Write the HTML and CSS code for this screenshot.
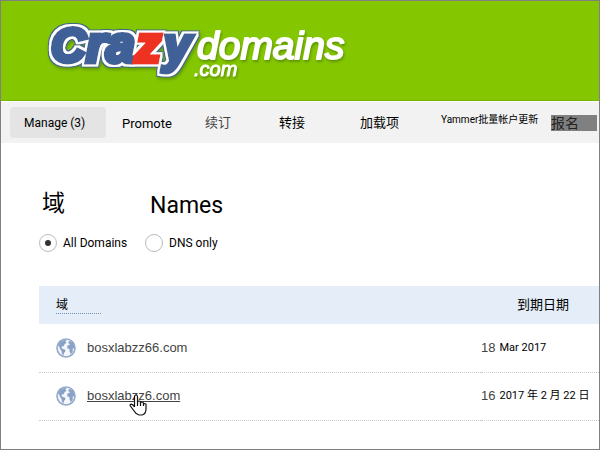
FILE: index.html
```html
<!DOCTYPE html>
<html lang="zh-CN">
<head>
<meta charset="utf-8">
<meta name="viewport" content="width=device-width, initial-scale=1">
<title>Crazy Domains</title>
<link rel="stylesheet" href="styles.css">
</head>
<body>
<svg class="defs" aria-hidden="true">
  <symbol id="globe" viewBox="0 0 20 20">
    <circle cx="10" cy="10" r="9" fill="#f4f7fb" stroke="#93aaca" stroke-width="1.6"/>
    <path fill="#89a2c6" d="M2 7 L4.500 3.500 L8 2 L10.500 2 L9.500 3.500 L10.500 5 L8.500 6 L8 8 L6 8.500 L5.500 10 L7 11 L9 11.500 L9.500 13 L8 15 L7.500 17.500 L6 16 L5.500 13 L4 11 L3 8.500 Z M12 4 L14 3 L17 5 L18.500 8 L18.500 11 L17.500 10 L16.500 11.500 L17 13 L15.500 15.500 L14.500 16 L13.500 13 L13.500 11 L11.500 10.500 L11 8.500 L12.500 7 L14 7 L13 5.500 Z"/>
  </symbol>
  <filter id="outline" x="-10%" y="-20%" width="120%" height="140%">
    <feMorphology in="SourceAlpha" operator="dilate" radius="3" result="big"/>
    <feMorphology in="SourceAlpha" operator="dilate" radius="2" result="mid"/>
    <feGaussianBlur in="big" stdDeviation="1.5" result="soft"/>
    <feOffset in="soft" dx="1" dy="2" result="drop"/>
    <feFlood flood-color="#4c7a00" flood-opacity="0.6"/><feComposite in2="drop" operator="in" result="shadow"/>
    <feFlood flood-color="#3f6a8c"/><feComposite in2="big" operator="in" result="edge"/>
    <feFlood flood-color="#ffffff"/><feComposite in2="mid" operator="in" result="white"/>
    <feMerge><feMergeNode in="shadow"/><feMergeNode in="edge"/><feMergeNode in="white"/><feMergeNode in="SourceGraphic"/></feMerge>
  </filter>
</svg>
<div class="page">
  <header class="banner">
    <a class="logo" href="#">
      <svg width="320" height="70" viewBox="0 0 320 70" role="img" aria-label="Crazy domains .com">
        <text class="crazy" x="11" y="41"><tspan class="cap">C</tspan><tspan x="46">r</tspan><tspan x="66">a</tspan><tspan x="124" class="tail">y</tspan><tspan x="95" class="red">z</tspan></text>
        <text class="domains" x="157" y="38">domains</text>
        <text class="com" x="154" y="55">.com</text>
      </svg>
    </a>
  </header>
  <nav class="tabs">
    <a class="tab active" href="#">Manage (3)</a>
    <a class="tab promote" href="#">Promote</a>
    <a class="tab soft" href="#">续订</a>
    <a class="tab" href="#">转接</a>
    <a class="tab" href="#">加载项</a>
    <a class="tab small" href="#">Yammer批量帐户更新</a>
    <a class="tab signup" href="#"><span>报名</span></a>
  </nav>
  <main class="content">
    <div class="filters">
      <h1>域</h1>
      <h1>Names</h1>
      <label><input type="radio" name="filter" checked>All Domains</label>
      <label><input type="radio" name="filter">DNS only</label>
    </div>
    <table>
      <thead>
        <tr><th scope="col"><a class="sort" href="#">域</a></th><th scope="col" class="due">到期日期</th></tr>
      </thead>
      <tbody>
        <tr>
          <td><div class="domain"><svg class="globe" aria-hidden="true"><use href="#globe"/></svg><a href="#">bosxlabzz66.com</a></div></td>
          <td><div class="date"><span class="day">18</span><span>Mar 2017</span></div></td>
        </tr>
        <tr>
          <td><div class="domain hovered"><svg class="globe" aria-hidden="true"><use href="#globe"/></svg><a href="#">bosxlabzz6.com<svg class="hand" viewBox="0 0 18 22" aria-hidden="true"><path d="M5.500 13 V3 Q5.500 1 7 1 T8.500 3 V8.500 Q8.500 7 10 7 T11.500 8.500 V9.500 Q11.500 8 13 8 T14.500 9.500 V10.500 Q14.500 9.500 15.800 9.500 T17 11 V15 Q17 20 13 21 H10 Q7 20.500 5.500 17.500 L1.200 11.800 Q0.800 10.300 2.200 10.200 Q3.800 10.300 5.500 13 M8.500 8.500 V12 M11.500 9 V12 M14.500 10 V12"/></svg></a></div></td>
          <td><div class="date"><span class="day">16</span><span>2017 年 2 月 22 日</span></div></td>
        </tr>
      </tbody>
    </table>
  </main>
</div>
</body>
</html>
```
FILE: styles.css
```css
* { box-sizing: border-box; }
body {
  margin: 0;
  background: #fff;
  color: #000;
  font: 12px/16px Roboto, "Noto Sans CJK SC", sans-serif;
}
a { color: inherit; text-decoration: none; }
.defs { position: absolute; width: 0; height: 0; }
.page { min-height: 100vh; border: 1px solid #808080; }

.banner {
  height: 100px;
  padding: 20px 0 0 39px;
  background: #84c600;
  border-bottom: 1px solid #78b400;
}
.logo svg { display: block; overflow: visible; }
.crazy {
  font: italic 700 52px "Liberation Sans", sans-serif;
  fill: #3f6098;
  stroke: #3f6098;
  stroke-width: 5px;
  filter: url(#outline);
}
.crazy .cap { font-size: 48px; }
.crazy .tail { font-size: 48px; }
.crazy .red { fill: #ee3124; stroke: #ee3124; }
.domains, .com {
  fill: #fff;
  stroke: #fff;
  stroke-linejoin: round;
  filter: drop-shadow(1px 2px 1px #5f9600);
}
.domains { font: italic 400 39px "Liberation Sans", sans-serif; stroke-width: 2px; }
.com { font: italic 400 20px "Liberation Sans", sans-serif; stroke-width: 1px; }

.tabs {
  display: grid;
  grid-template-columns: 112fr 83fr 74fr 81fr 81fr 110fr 48fr;
  align-items: center;
  height: 42px;
  padding-left: 9px;
  background: #f2f2f2;
  border-top: 1px solid #fff;
}
.tab { font-size: 13px; white-space: nowrap; }
.active {
  justify-self: start;
  padding: 8px 21px 7px 14px;
  border-radius: 4px;
  background: #e4e4e4;
  font-size: 12px;
}
.promote { padding-top: 2px; }
.soft { color: #444; }
.small { font-size: 10px; padding-bottom: 6px; }
.signup { padding-right: 2px; font-size: 14px; }
.signup span { display: block; background: #808080; line-height: 16px; color: #222; }

.content { padding: 41px 0 0 38px; }
.filters {
  display: grid;
  grid-template-columns: 106px 1fr;
  row-gap: 7px;
  margin-bottom: 33px;
}
h1 { margin: 0; padding-left: 3px; font-size: 23px; line-height: 40px; font-weight: 400; }
h1 + h1 { padding-left: 5px; padding-top: 2px; }
label { display: flex; align-items: center; gap: 6px; height: 20px; font-size: 12px; }
input {
  appearance: none;
  display: grid;
  place-content: center;
  width: 18px;
  height: 18px;
  margin: 0;
  border: 1px solid #bbb;
  border-radius: 50%;
  background: #fff;
}
input:checked::before {
  content: "";
  width: 6px;
  height: 6px;
  border-radius: 50%;
  background: #333;
}

table { width: 100%; border-collapse: collapse; table-layout: fixed; }
th, td { padding: 0; text-align: left; font-weight: 400; }
th { height: 38px; background: #e4edf8; }
th.due { width: 118px; padding-left: 36px; font-size: 13px; }
.sort { display: block; width: 45px; margin-left: 17px; line-height: 16px; border-bottom: 1px dotted #6f92bd; }
td { height: 48px; border-bottom: 1px dotted #ccc; color: #444; font-family: "Liberation Sans", sans-serif; font-size: 13px; }
.domain { display: flex; align-items: center; gap: 11px; padding-left: 17px; }
.domain a { position: relative; }
.hovered a { text-decoration: underline; }
.globe { width: 20px; height: 20px; }
.hand { position: absolute; left: 42px; top: 6px; width: 18px; height: 22px; fill: #fff; stroke: #111; stroke-width: 1.2px; }
.date { display: flex; align-items: center; gap: 4px; white-space: nowrap; }
.date span + span { color: #000; font-family: Roboto, "Noto Sans CJK SC", sans-serif; font-size: 11px; }
```
